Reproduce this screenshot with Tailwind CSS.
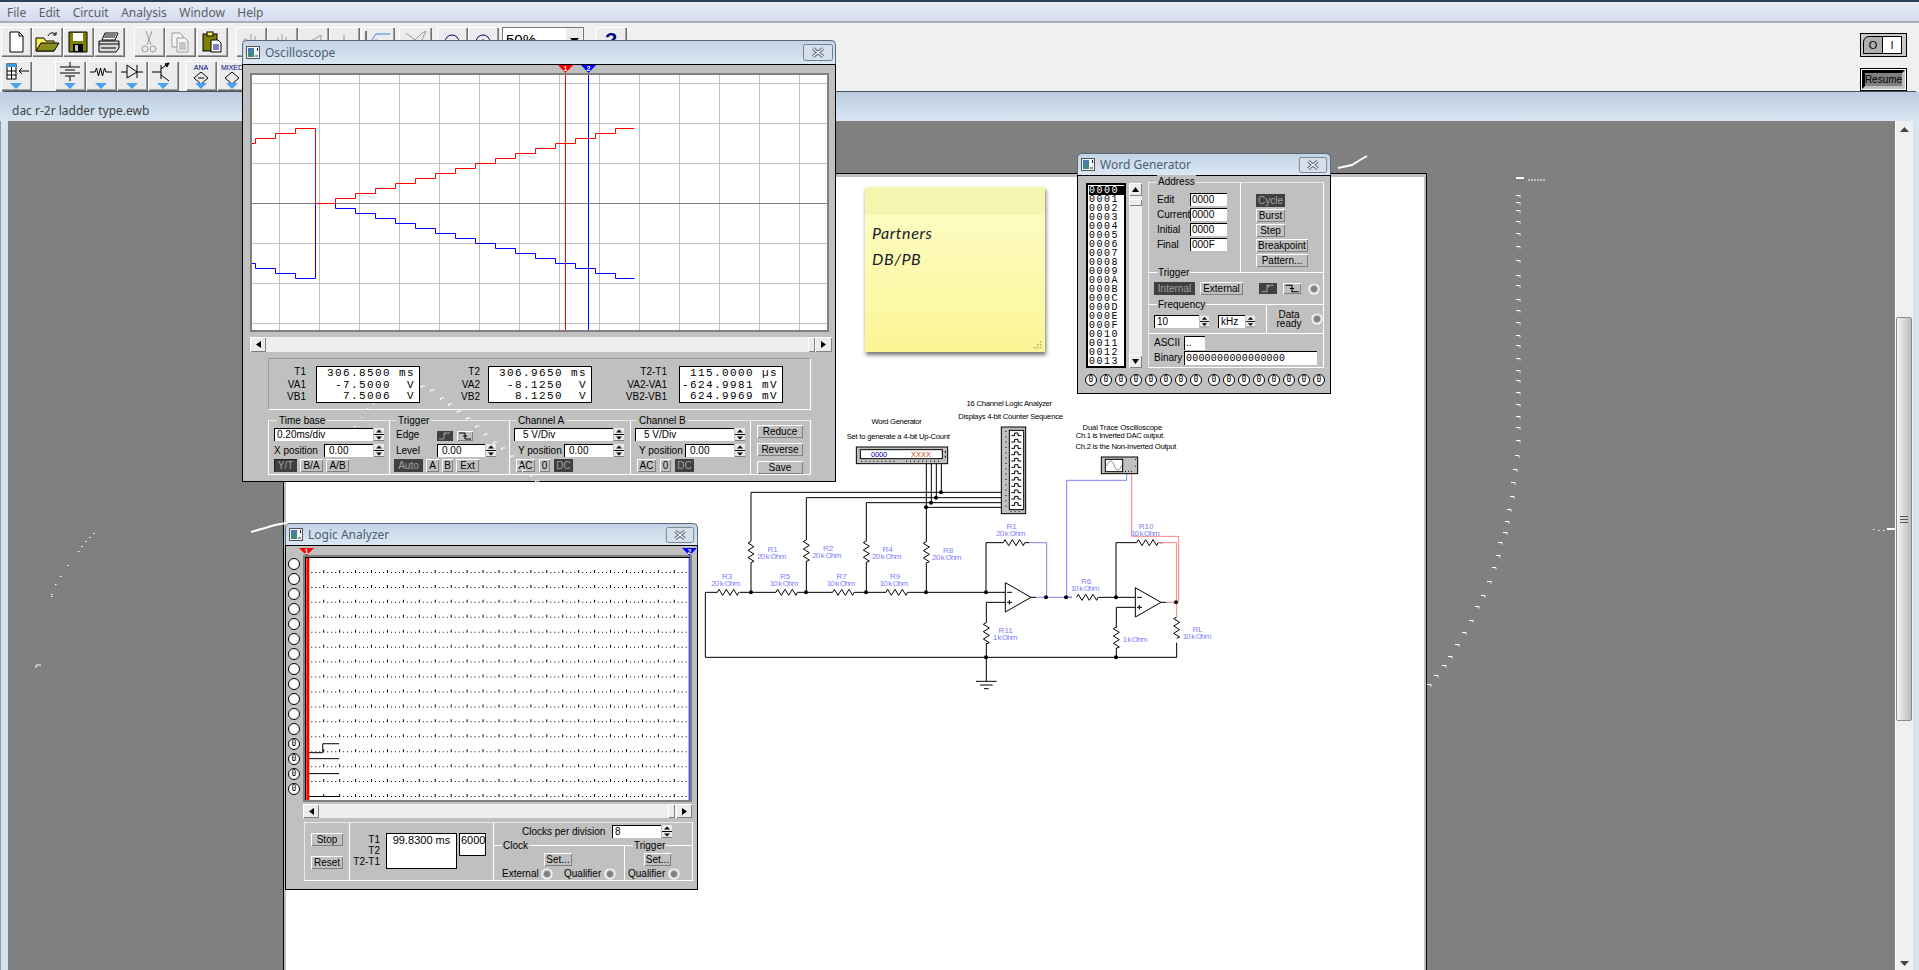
<!DOCTYPE html>
<html lang="en">
<head>
<meta charset="UTF-8">
<title>Electronics Workbench - dac r-2r ladder type.ewb</title>
<script src="https://cdn.jsdelivr.net/npm/@tailwindcss/browser@4"></script>
</head>
<body class="relative w-[1919px] h-[970px] overflow-hidden bg-[#f0f0f0] font-['Liberation_Sans',sans-serif] text-[10px] text-black flex flex-col">

<svg class="absolute w-0 h-0">
  <defs>
    <symbol id="spin" viewBox="0 0 10 13">
      <rect width="10" height="13" fill="#e8e8e8"/><rect y="6" width="10" height="1" fill="#000"/><rect y="12" width="10" height="1" fill="#808080"/>
      <path d="M5 1.5 8 4.5H2z"/><path d="M2 8.5H8L5 11.5z"/>
    </symbol>
    <symbol id="winicon" viewBox="0 0 14 13">
      <rect x=".5" y=".5" width="13" height="12" fill="#f4f4f4" stroke="#555"/>
      <rect x="2" y="2" width="6" height="9" fill="#3c8a80"/><rect x="2" y="2" width="6" height="4" fill="#4a78b0"/><rect x="9" y="9" width="3" height="2" fill="#999"/><rect x="11" y="2" width="1" height="3" fill="#222"/>
    </symbol>
    <symbol id="closex" viewBox="0 0 30 17">
      <rect x=".5" y=".5" width="29" height="16" rx="2" fill="#d5e0ec" stroke="#73808e"/>
      <path d="M10 4.500 20 12.500M20 4.500 10 12.500" stroke="#59636e" stroke-width="3.500"/><path d="M10 4.500 20 12.500M20 4.500 10 12.500" stroke="#f2f4f6" stroke-width="1.500"/>
    </symbol>
    <symbol id="radio" viewBox="0 0 12 12">
      <circle cx="6" cy="6" r="5" fill="#c0c0c0" stroke="#fff" stroke-width="1.200"/><circle cx="6" cy="6" r="3" fill="#808080"/>
    </symbol>
    <symbol id="left" viewBox="0 0 5 7"><path d="M5 0V7L0 3.500z"/></symbol>
    <symbol id="right" viewBox="0 0 5 7"><path d="M0 0V7L5 3.500z"/></symbol>
    <symbol id="rise" viewBox="0 0 16 10"><path d="M2 8H7V2H13M7 2 9 4" fill="none" stroke="currentColor"/></symbol>
    <symbol id="fall" viewBox="0 0 16 10"><path d="M2 2H8V8H14M6 5H10" fill="none" stroke="currentColor"/></symbol>
    <symbol id="tooldrop" viewBox="0 0 12 6"><path d="M0 0H12L6 6z" fill="#4aa3f0"/></symbol>
  </defs>
</svg>

<!-- menu -->
<div class="h-[23px] shrink-0 flex items-center gap-[12.500px] pl-[7px] pt-[2px] border-t-2 border-t-[#2c4058] border-b-2 border-b-[#a8acb4] bg-linear-to-b from-[#e6ebf6] to-[#d5dcee] font-['Noto_Sans',sans-serif] text-[12px] text-[#5a5f68]">
  <span>File</span><span>Edit</span><span>Circuit</span><span>Analysis</span><span>Window</span><span>Help</span>
</div>

<!-- toolbars -->
<div class="h-[68px] shrink-0 relative pt-[4px]">
  <div class="flex h-[29px] pl-px">
    <button class="w-[30px] h-[29px] flex items-center justify-center bg-[#ececec] shadow-[inset_1px_1px_0_#fff,inset_-1px_-1px_0_#a0a0a0,1px_1px_0_#707070]"><svg class="w-[24px] h-[24px]" viewBox="0 0 24 24"><path d="M6 2H15L19 6V22H6z" fill="#fff" stroke="#000"/><path d="M15 2V6H19" fill="none" stroke="#000"/></svg></button>
    <button class="ml-px w-[30px] h-[29px] flex items-center justify-center bg-[#ececec] shadow-[inset_1px_1px_0_#fff,inset_-1px_-1px_0_#a0a0a0,1px_1px_0_#707070]"><svg class="w-[26px] h-[24px]" viewBox="0 0 26 24"><path d="M2 8H10L12 11H20V21H2z" fill="#f4ee60" stroke="#000"/><path d="M2 21 7 13H25L20 21z" fill="#8c8c1a" stroke="#000"/><path d="M14 6C16 2 20 2 22 5M22 2V5H19" fill="none" stroke="#000"/></svg></button>
    <button class="ml-px w-[30px] h-[29px] flex items-center justify-center bg-[#ececec] shadow-[inset_1px_1px_0_#fff,inset_-1px_-1px_0_#a0a0a0,1px_1px_0_#707070]"><svg class="w-[24px] h-[24px]" viewBox="0 0 24 24"><path d="M3 2H21V22H3z" fill="#808000" stroke="#000"/><rect x="7" y="3" width="10" height="8" fill="#fff"/><rect x="7" y="14" width="10" height="8" fill="#000"/><rect x="9" y="15" width="3" height="6" fill="#c0c0c0"/></svg></button>
    <button class="ml-px w-[30px] h-[29px] flex items-center justify-center bg-[#ececec] shadow-[inset_1px_1px_0_#fff,inset_-1px_-1px_0_#a0a0a0,1px_1px_0_#707070]"><svg class="w-[26px] h-[24px]" viewBox="0 0 26 24"><path d="M9 3H22L19 10H6z" fill="#fff" stroke="#000"/><path d="M9 5H20M8 7H19" stroke="#000"/><path d="M3 11H23V18L20 22H3z" fill="#d8d8d8" stroke="#000"/><path d="M3 14H23M5 18H20" stroke="#000"/></svg></button>
    <button class="ml-[10px] w-[30px] h-[29px] flex items-center justify-center bg-[#ececec] shadow-[inset_1px_1px_0_#fff,inset_-1px_-1px_0_#a0a0a0,1px_1px_0_#707070]"><svg class="w-[24px] h-[24px]" viewBox="0 0 24 24" fill="none" stroke="#9a9a9a"><path d="M9 1 14 15M15 1 10 15"/><circle cx="8" cy="19" r="3"/><circle cx="16" cy="19" r="3"/></svg></button>
    <button class="ml-px w-[30px] h-[29px] flex items-center justify-center bg-[#ececec] shadow-[inset_1px_1px_0_#fff,inset_-1px_-1px_0_#a0a0a0,1px_1px_0_#707070]"><svg class="w-[24px] h-[24px]" viewBox="0 0 24 24" fill="#f4f4f4" stroke="#9a9a9a"><path d="M4 3H12L15 6V17H4z"/><path d="M9 8H17L20 11V22H9z"/><path d="M11 13H18M11 15H18M11 17H18M11 19H18" fill="none"/></svg></button>
    <button class="ml-[2px] w-[30px] h-[29px] flex items-center justify-center bg-[#ececec] shadow-[inset_1px_1px_0_#fff,inset_-1px_-1px_0_#a0a0a0,1px_1px_0_#707070]"><svg class="w-[24px] h-[24px]" viewBox="0 0 24 24"><rect x="3" y="4" width="14" height="17" fill="#808000" stroke="#000"/><rect x="7" y="2" width="6" height="4" fill="#f4ee60" stroke="#000"/><path d="M11 10H18L21 13V22H11z" fill="#fff" stroke="#000"/><path d="M13 15H19M13 17H19M13 19H19" stroke="#000080"/></svg></button>
    <button class="ml-[9px] w-[30px] h-[29px] flex items-center justify-center bg-[#ececec] shadow-[inset_1px_1px_0_#fff,inset_-1px_-1px_0_#a0a0a0,1px_1px_0_#707070]"><svg class="w-[24px] h-[24px]" viewBox="0 0 24 24" fill="none" stroke="#9a9a9a"><path d="M3 12C6 8 8 8 10 12M12 4V14M16 6V14"/></svg></button>
    <button class="ml-px w-[30px] h-[29px] flex items-center justify-center bg-[#ececec] shadow-[inset_1px_1px_0_#fff,inset_-1px_-1px_0_#a0a0a0,1px_1px_0_#707070]"><svg class="w-[24px] h-[24px]" viewBox="0 0 24 24" fill="none" stroke="#9a9a9a"><path d="M8 14V7M12 14V4M16 14V7"/></svg></button>
    <button class="ml-px w-[30px] h-[29px] flex items-center justify-center bg-[#ececec] shadow-[inset_1px_1px_0_#fff,inset_-1px_-1px_0_#a0a0a0,1px_1px_0_#707070]"><svg class="w-[24px] h-[24px]" viewBox="0 0 24 24" fill="none" stroke="#9a9a9a"><path d="M5 14 20 5V14z"/></svg></button>
    <button class="ml-px w-[30px] h-[29px] flex items-center justify-center bg-[#ececec] shadow-[inset_1px_1px_0_#fff,inset_-1px_-1px_0_#a0a0a0,1px_1px_0_#707070]"><svg class="w-[24px] h-[24px]" viewBox="0 0 24 24" fill="none" stroke="#9a9a9a"><path d="M12 5V14M9 11 12 14 15 11"/></svg></button>
    <button class="ml-[2px] w-[33px] h-[29px] flex items-center justify-center bg-[#ececec] shadow-[inset_1px_1px_0_#fff,inset_-1px_-1px_0_#a0a0a0,1px_1px_0_#707070]"><svg class="w-[28px] h-[24px]" viewBox="0 0 28 24" fill="none"><path d="M2 1V14" stroke="#000"/><path d="M6 13 12 4H26" stroke="#2a8cf0"/><circle cx="12" cy="13" r="3" stroke="#e00000"/></svg></button>
    <button class="ml-[5px] w-[32px] h-[29px] flex items-center justify-center bg-[#ececec] shadow-[inset_1px_1px_0_#fff,inset_-1px_-1px_0_#a0a0a0,1px_1px_0_#707070]"><svg class="w-[26px] h-[24px]" viewBox="0 0 26 24" fill="none" stroke="#9a9a9a"><path d="M4 3 13 10 20 3 24 1 18 14"/></svg></button>
    <button class="ml-[6px] w-[30px] h-[29px] flex items-center justify-center bg-[#ececec] shadow-[inset_1px_1px_0_#fff,inset_-1px_-1px_0_#a0a0a0,1px_1px_0_#707070]"><svg class="w-[24px] h-[24px]" viewBox="0 0 24 24" fill="none" stroke="#000060"><circle cx="12" cy="12" r="7"/><path d="M9 12H15"/></svg></button>
    <button class="ml-px w-[30px] h-[29px] flex items-center justify-center bg-[#ececec] shadow-[inset_1px_1px_0_#fff,inset_-1px_-1px_0_#a0a0a0,1px_1px_0_#707070]"><svg class="w-[24px] h-[24px]" viewBox="0 0 24 24" fill="none" stroke="#000060"><circle cx="12" cy="12" r="7"/><path d="M9 12H15M12 9V15"/></svg></button>
    <div class="ml-[4px] w-[82px] h-[27px] flex items-start bg-white border border-[#777] text-[15px] leading-[24px] pl-[3px]">50%<span class="ml-auto mr-px w-[16px] h-[25px] bg-[#ececec] flex items-center justify-center"><svg class="w-[9px] h-[5px]" viewBox="0 0 9 5"><path d="M0 0H9L4.500 5z"/></svg></span></div>
    <button class="ml-[12px] w-[30px] h-[29px] flex justify-center bg-[#ececec] shadow-[inset_1px_1px_0_#fff,inset_-1px_-1px_0_#a0a0a0,1px_1px_0_#707070] text-[#000080] text-[20px] font-bold leading-[26px]">?</button>
  </div>
  <div class="flex h-[29px] pl-px mt-[5px]">
    <button class="relative w-[30px] h-[29px] flex justify-center bg-[#ececec] shadow-[inset_1px_1px_0_#fff,inset_-1px_-1px_0_#a0a0a0,1px_1px_0_#707070]"><svg class="w-[28px] h-[21px]" viewBox="0 0 28 21"><rect x="5" y="3" width="9" height="15" fill="#fff" stroke="#000"/><rect x="5" y="3" width="9" height="3" fill="#3a9cf0"/><path d="M5 10H14M5 14H14M9.500 6V18M27 10H17M20 7 17 10 20 13" fill="none" stroke="#000"/></svg><svg class="absolute bottom-[1px] left-[9px] w-[12px] h-[6px]"><use href="#tooldrop"/></svg></button>
    <button class="relative ml-[24px] w-[30px] h-[29px] flex justify-center bg-[#ececec] shadow-[inset_1px_1px_0_#fff,inset_-1px_-1px_0_#a0a0a0,1px_1px_0_#707070]"><svg class="w-[24px] h-[21px]" viewBox="0 0 24 21" fill="none" stroke="#000"><path d="M12 1V6M2 6H22M7 9H17M2 12H22M7 15H17M12 15V20"/></svg><svg class="absolute bottom-[1px] left-[9px] w-[12px] h-[6px]"><use href="#tooldrop"/></svg></button>
    <button class="relative ml-px w-[30px] h-[29px] flex justify-center bg-[#ececec] shadow-[inset_1px_1px_0_#fff,inset_-1px_-1px_0_#a0a0a0,1px_1px_0_#707070]"><svg class="w-[24px] h-[21px]" viewBox="0 0 24 21" fill="none" stroke="#000"><path d="M1 11H6L7.500 7 9.500 15 11.500 7 13.500 15 15.500 7 17 11H23"/></svg><svg class="absolute bottom-[1px] left-[9px] w-[12px] h-[6px]"><use href="#tooldrop"/></svg></button>
    <button class="relative ml-px w-[30px] h-[29px] flex justify-center bg-[#ececec] shadow-[inset_1px_1px_0_#fff,inset_-1px_-1px_0_#a0a0a0,1px_1px_0_#707070]"><svg class="w-[24px] h-[21px]" viewBox="0 0 24 21" fill="none" stroke="#000"><path d="M1 11H7M17 11H23M7 4V17L17 11 7 4M17 4V17"/></svg><svg class="absolute bottom-[1px] left-[9px] w-[12px] h-[6px]"><use href="#tooldrop"/></svg></button>
    <button class="relative ml-px w-[30px] h-[29px] flex justify-center bg-[#ececec] shadow-[inset_1px_1px_0_#fff,inset_-1px_-1px_0_#a0a0a0,1px_1px_0_#707070]"><svg class="w-[24px] h-[21px]" viewBox="0 0 24 21" fill="none" stroke="#000"><path d="M1 11H10M10 4V18M10 8 18 2M10 14 18 20"/><path d="M18 2 14 3 16 6z" fill="#000"/></svg><svg class="absolute bottom-[1px] left-[9px] w-[12px] h-[6px]"><use href="#tooldrop"/></svg></button>
    <button class="relative ml-[8px] w-[30px] h-[29px] flex flex-col items-center bg-[#ececec] shadow-[inset_1px_1px_0_#fff,inset_-1px_-1px_0_#a0a0a0,1px_1px_0_#707070]"><span class="text-[7px] leading-[9px] mt-[2px] text-[#000080]">ANA</span><svg class="w-[16px] h-[12px]" viewBox="0 0 16 12" fill="none" stroke="#000"><path d="M8 0 15 6 8 12 1 6z"/><path d="M5 6H11"/></svg><svg class="absolute bottom-[1px] left-[9px] w-[12px] h-[6px]"><use href="#tooldrop"/></svg></button>
    <button class="relative ml-px w-[30px] h-[29px] flex flex-col items-center bg-[#ececec] shadow-[inset_1px_1px_0_#fff,inset_-1px_-1px_0_#a0a0a0,1px_1px_0_#707070]"><span class="text-[7px] leading-[9px] mt-[2px] text-[#000080]">MIXED</span><svg class="w-[16px] h-[12px]" viewBox="0 0 16 12" fill="none" stroke="#000"><path d="M8 0 15 6 8 12 1 6z"/></svg><svg class="absolute bottom-[1px] left-[9px] w-[12px] h-[6px]"><use href="#tooldrop"/></svg></button>
  </div>
  <!-- power switch and resume, pinned to the right end of the toolbar -->
  <div class="absolute right-[12px] top-[10px] flex flex-col gap-[11px]">
    <div class="w-[47px] h-[24px] flex border border-black bg-[#c8c8c8] p-[2px]">
      <span class="w-[20px] flex items-center justify-center text-[11px] bg-[#b0b0b0] border border-black rounded-tl-[6px]">O</span>
      <span class="w-[19px] flex items-center justify-center text-[11px] bg-white border border-l-0 border-black">I</span>
    </div>
    <div class="w-[47px] h-[23px] border border-black bg-white p-[1px]">
      <div class="h-full border-[3px] border-t-black border-l-black border-r-[#c0c0c0] border-b-[#c0c0c0] bg-[#808080] flex items-center justify-center text-[10px] leading-none">Resume</div>
    </div>
  </div>
</div>

<!-- circuit window -->
<div class="flex-1 flex flex-col min-h-0 rounded-t-[5px] border-t border-[#44505c] bg-[#d6e4f2]">
  <div class="h-[29px] shrink-0 flex items-center pl-[12px] pt-[8px] bg-linear-to-b from-[#bccddf] to-[#d8e5f2] font-['Noto_Sans',sans-serif] text-[12px] text-[#444]">dac r-2r ladder type.ewb</div>
  <div class="flex-1 flex min-h-0">
    <div class="w-[8px] shrink-0 border-l border-l-[#8a9aaa]"></div>
    <div class="relative w-[1887px] bg-[#808080] overflow-hidden">
      <div class="absolute left-[275px] top-[52px] w-[1144px] h-[800px] border-x border-t border-black">
        <div class="relative h-full bg-white border-x-2 border-t-[3px] border-[#c0c0c0]">
          <!-- sticky note -->
          <div class="absolute left-[579px] top-[10px] w-[180px] h-[165px] flex flex-col shadow-[1px_3px_4px_rgba(0,0,0,0.55)] bg-linear-to-b from-[#fefdc9] to-[#fbf594]">
            <div class="h-[28px] bg-[#f6f5b0]"></div>
            <div class="pl-[7px] pt-[5px] font-['Lato',sans-serif] italic text-[16px] leading-[26px] tracking-[0.600px] text-[#16202a]">Partners<br>DB/PB</div>
            <svg class="absolute right-[3px] bottom-[3px] w-[8px] h-[8px]" viewBox="0 0 8 8" fill="#b4b070"><rect x="6" width="1.500" height="1.500"/><rect x="3" y="3" width="1.500" height="1.500"/><rect x="6" y="3" width="1.500" height="1.500"/><rect y="6" width="1.500" height="1.500"/><rect x="3" y="6" width="1.500" height="1.500"/><rect x="6" y="6" width="1.500" height="1.500"/></svg>
          </div>
          <!-- schematic, drawn in 3x units so it lines up with a 3x crop -->
          <svg id="schematic" class="absolute left-[414px] top-[214px] w-[520px] h-[310px]" viewBox="0 0 1560 930" fill="none" stroke="#000" stroke-width="3" font-family="Liberation Sans, sans-serif">
            <defs>
              <path id="rh" d="M0 0l5-9 11 18 11-18 11 18 11-18 11 18 4-9"/>
              <path id="rv" d="M0 0l-9 5 18 11-18 11 18 11-18 11 18 11-9 4"/>
            </defs>
            <path d="M52 604H16V799H1430V755M118 604H228M292 604H398M462 604H558M622 604H915"/>
            <path d="M153 604V515M153 450V304H905M319 604V510M319 447V320H905M499 604V513M499 450V335H905M679 604V515M679 452V218M679 349H905M694 218V335M709 218V320M724 218V304"/>
            <path d="M858 604V455H910M974 455H988M993 619H1008M1100 619H1115M1195 619H1305M1248 619V455H1310M1375 455H1390M1383 634H1398"/>
            <path d="M915 634H859V695M859 755V870M828 871H890M840 882H878M852 893H866M1305 649H1249V710M1249 770V799"/>
            <use href="#rh" x="52" y="604"/><use href="#rh" x="228" y="604"/><use href="#rh" x="398" y="604"/><use href="#rh" x="558" y="604"/>
            <use href="#rh" x="910" y="455"/><use href="#rh" x="1130" y="619"/><use href="#rh" x="1310" y="455"/>
            <use href="#rv" x="153" y="451"/><use href="#rv" x="319" y="447"/><use href="#rv" x="499" y="450"/><use href="#rv" x="679" y="452"/>
            <use href="#rv" x="859" y="695"/><use href="#rv" x="1249" y="708"/><use href="#rv" x="1430" y="678"/>
            <path d="M916 575V663L993 619zM1306 590V678L1383 634zM921 604H936M921 634H936M928 627V641M1311 619H1326M1311 649H1326M1318 642V656"/>
            <path d="M988 455H1040V619M1008 619H1115M1280 248V268H1100V619" stroke="#8080ff"/>
            <path d="M1375 455H1430V634M1295 248V436H1436V634M1398 634H1430V678" stroke="#ff8080"/>
            <g fill="#000" stroke="none">
              <circle cx="153" cy="604" r="6"/><circle cx="318" cy="604" r="6"/><circle cx="498" cy="604" r="6"/><circle cx="678" cy="604" r="6"/><circle cx="858" cy="604" r="6"/>
              <circle cx="1038" cy="619" r="6"/><circle cx="1098" cy="619" r="6"/><circle cx="1248" cy="619" r="6"/><circle cx="1428" cy="634" r="6"/>
              <circle cx="858" cy="799" r="6"/><circle cx="1248" cy="799" r="6"/>
              <circle cx="723" cy="304" r="6"/><circle cx="708" cy="320" r="6"/><circle cx="693" cy="335" r="6"/><circle cx="678" cy="349" r="6"/>
            </g>
            <!-- word generator icon -->
            <rect x="469" y="168" width="274" height="50" fill="#c0c0c0"/>
            <rect x="481" y="176" width="246" height="27" fill="#fff"/>
            <text x="537" y="197" text-anchor="middle" font-size="22" fill="#0000c0" stroke="none" textLength="48">0000</text>
            <text x="663" y="197" text-anchor="middle" font-size="22" fill="#c04000" stroke="none" textLength="60">XXXX</text>
            <path d="M484 211H590M618 211H726" stroke-dasharray="3 9"/>
            <path d="M736 180V186M736 194V200"/>
            <!-- logic analyzer icon -->
            <rect x="904" y="108" width="73" height="260" fill="#c0c0c0"/>
            <rect x="928" y="118" width="43" height="238" fill="#fff"/>
            <path d="M918 120V350" stroke-dasharray="3 13"/>
            <g id="lawaves"></g>
            <path d="M932 362H968" stroke-dasharray="3 9"/>
            <!-- scope icon -->
            <rect x="1204" y="198" width="109" height="50" fill="#c0c0c0"/>
            <rect x="1216" y="205" width="52" height="37" fill="#fff"/>
            <path d="M1220 224C1230 200 1240 212 1243 224S1256 246 1265 224" stroke="#808080"/>
            <path d="M1275 241H1297M1307 204V210M1307 224V230" stroke-dasharray="3 6"/>
            <g fill="#000" stroke="none" font-size="23">
              <text x="928" y="45" textLength="257" text-anchor="middle">16 Channel Logic Analyzer</text>
              <text x="932" y="84" textLength="314" text-anchor="middle">Displays 4-bit Counter Sequence</text>
              <text x="590" y="98" textLength="151" text-anchor="middle">Word Generator</text>
              <text x="595" y="144" textLength="310" text-anchor="middle">Set to generate a 4-bit Up-Count</text>
              <text x="1267" y="117" textLength="239" text-anchor="middle">Dual Trace Oscilloscope</text>
              <text x="1261" y="141" textLength="268" text-anchor="middle">Ch.1 is Inverted DAC output.</text>
              <text x="1278" y="174" textLength="303" text-anchor="middle">Ch.2 is the Non-Inverted Output</text>
            </g>
            <g fill="#8080ff" stroke="none" font-size="24" text-anchor="middle">
              <text x="81" y="564">R3</text><text x="77" y="585" textLength="88">20 k Ohm</text>
              <text x="255" y="564">R5</text><text x="252" y="585" textLength="86">10 k Ohm</text>
              <text x="425" y="564">R7</text><text x="423" y="585" textLength="86">10 k Ohm</text>
              <text x="585" y="564">R9</text><text x="582" y="585" textLength="86">10 k Ohm</text>
              <text x="218" y="484">R1</text><text x="215" y="504" textLength="88">20 k Ohm</text>
              <text x="384" y="480">R2</text><text x="380" y="501" textLength="88">20 k Ohm</text>
              <text x="563" y="484">R4</text><text x="560" y="504" textLength="88">20 k Ohm</text>
              <text x="744" y="487">R8</text><text x="740" y="507" textLength="88">20 k Ohm</text>
              <text x="935" y="415">R1</text><text x="932" y="435" textLength="88">20 k Ohm</text>
              <text x="917" y="726">R11</text><text x="915" y="747" textLength="74">1 k Ohm</text>
              <text x="1158" y="579">R6</text><text x="1155" y="600" textLength="86">10 k Ohm</text>
              <text x="1338" y="414">R10</text><text x="1336" y="435" textLength="86">10 k Ohm</text>
              <text x="1305" y="753" textLength="74">1 k Ohm</text>
              <text x="1493" y="723">RL</text><text x="1491" y="744" textLength="86">10 k Ohm</text>
            </g>
          </svg>
        </div>
      </div>
    </div>
    <!-- vertical scrollbar -->
    <div class="relative w-[18px] shrink-0 bg-[#f0f0f0] border-l border-white">
      <svg class="absolute left-[4px] top-[6px] w-[9px] h-[5px]" viewBox="0 0 9 5"><path d="M4.500 0 9 5H0z" fill="#444"/></svg>
      <div class="absolute left-0 top-[196px] w-[16px] h-[404px] flex items-center justify-center rounded-[2px] border border-[#8c8c8c] bg-linear-to-r from-[#f4f4f4] to-[#bcbcbc]">
        <svg class="w-[8px] h-[7px]" viewBox="0 0 8 7" stroke="#555"><path d="M0 .5H8M0 3.500H8M0 6.500H8"/></svg>
      </div>
      <svg class="absolute left-[4px] bottom-[4px] w-[9px] h-[5px]" viewBox="0 0 9 5"><path d="M0 0H9L4.500 5z" fill="#444"/></svg>
    </div>
    <div class="w-[6px] shrink-0"></div>
  </div>
</div>

<!-- oscilloscope -->
<section class="absolute left-[242px] top-[40px] w-[594px] h-[442px] flex flex-col">
  <div class="h-[24px] shrink-0 flex items-center pl-[3px] pr-[2px] rounded-t-[5px] border border-b-0 border-[#5a6a7a] bg-linear-to-b from-[#c4d4e4] to-[#dce8f4] font-['Noto_Sans',sans-serif] text-[12px] text-[#4a6075]">
    <svg class="w-[14px] h-[13px] mr-[5px]"><use href="#winicon"/></svg>Oscilloscope
    <svg class="ml-auto w-[30px] h-[17px]"><use href="#closex"/></svg>
  </div>
  <div class="relative flex-1 border border-black bg-[#c0c0c0]">
    <svg class="absolute left-0 top-0 w-[590px] h-[9px]" viewBox="243 65 590 9">
      <path d="M558 65H573L565.500 73z" fill="#f00"/><path d="M581 65H596L588.500 73z" fill="#00f"/>
      <text x="565.500" y="70.500" text-anchor="middle" font-size="7" font-weight="700" fill="#fff">1</text><text x="588.500" y="70.500" text-anchor="middle" font-size="7" font-weight="700" fill="#fff">2</text>
    </svg>
    <div class="mt-[8px] ml-[7px] w-[579px] h-[259px] border-2 border-[#808080] bg-white">
      <svg id="scope" class="block w-[575px] h-[255px]" viewBox="252 75 575 255" fill="none"></svg>
    </div>
    <div class="mt-[5px] ml-[7px] w-[582px] h-[15px] flex bg-[#efefef]">
      <button class="w-[16px] flex items-center justify-center bg-[#ececec] shadow-[inset_1px_1px_0_#fff,inset_-1px_-1px_0_#808080]"><svg class="w-[5px] h-[7px]"><use href="#left"/></svg></button>
      <button class="ml-auto w-[7px] bg-[#ececec] shadow-[inset_1px_1px_0_#fff,inset_-1px_-1px_0_#808080]"></button>
      <button class="w-[17px] flex items-center justify-center bg-[#ececec] shadow-[inset_1px_1px_0_#fff,inset_-1px_-1px_0_#808080]"><svg class="w-[5px] h-[7px]"><use href="#right"/></svg></button>
    </div>
    <!-- readouts -->
    <div class="mt-[6px] ml-[25px] w-[543px] h-[52px] flex pt-[7px] border border-white border-t-[#9a9a9a] border-l-[#9a9a9a]">
      <div class="w-[37px] text-right leading-[12.500px]">T1<br>VA1<br>VB1</div>
      <pre class="ml-[10px] w-[104px] h-[37px] pl-[2px] pt-px bg-white border border-black font-['Liberation_Mono',monospace] text-[11px] tracking-[1.400px] leading-[11.700px]"> 306.8500 ms
  -7.5000  V
   7.5006  V</pre>
      <div class="w-[60px] text-right leading-[12.500px]">T2<br>VA2<br>VB2</div>
      <pre class="ml-[8px] w-[104px] h-[37px] pl-[2px] pt-px bg-white border border-black font-['Liberation_Mono',monospace] text-[11px] tracking-[1.400px] leading-[11.700px]"> 306.9650 ms
  -8.1250  V
   8.1250  V</pre>
      <div class="w-[75px] text-right leading-[12.500px]">T2-T1<br>VA2-VA1<br>VB2-VB1</div>
      <pre class="ml-[12px] w-[104px] h-[37px] pl-[2px] pt-px bg-white border border-black font-['Liberation_Mono',monospace] text-[11px] tracking-[1.400px] leading-[11.700px]"> 115.0000 µs
-624.9981 mV
 624.9969 mV</pre>
    </div>
    <!-- controls -->
    <div class="mt-[10px] ml-[25px] w-[543px] h-[55px] flex border border-white border-t-[#e8e8e8]">
      <div class="w-[121px] pl-[5px] border-r border-white">
        <div class="-mt-[7px] ml-[3px] w-fit h-[14px] px-[2px] leading-[14px] bg-[#c0c0c0]">Time base</div>
        <div class="flex h-[13px]"><div class="w-[99px] bg-white border-t border-l border-black pl-[2px] leading-[12px]">0.20ms/div</div><svg class="ml-px w-[10px] h-[13px]"><use href="#spin"/></svg></div>
        <div class="flex h-[13px] mt-[3px]"><span class="w-[50px] leading-[13px]">X position</span><div class="w-[49px] bg-white border-t border-l border-black pl-[4px] leading-[12px]">0.00</div><svg class="ml-px w-[10px] h-[13px]"><use href="#spin"/></svg></div>
        <div class="flex gap-[3px] mt-[2px] h-[13px]">
          <span class="w-[23px] flex items-center justify-center bg-[#404040] text-[#a0a0a0] shadow-[inset_1px_1px_0_#222]">Y/T</span>
          <span class="w-[23px] flex items-center justify-center shadow-[inset_1px_1px_0_#fff,inset_-1px_-1px_0_#808080]">B/A</span>
          <span class="w-[23px] flex items-center justify-center shadow-[inset_1px_1px_0_#fff,inset_-1px_-1px_0_#808080]">A/B</span>
        </div>
      </div>
      <div class="w-[120px] pl-[6px] border-r border-white">
        <div class="-mt-[7px] w-fit h-[14px] px-[2px] leading-[14px] bg-[#c0c0c0]">Trigger</div>
        <div class="flex h-[13px] items-end"><span class="w-[41px] leading-[13px]">Edge</span>
          <svg class="w-[16px] h-[10px] bg-[#404040] text-[#a0a0a0]"><use href="#rise"/></svg>
          <svg class="ml-[4px] w-[16px] h-[10px] text-black shadow-[inset_1px_1px_0_#fff,inset_-1px_-1px_0_#808080]"><use href="#fall"/></svg>
        </div>
        <div class="flex h-[13px] mt-[3px]"><span class="w-[41px] leading-[13px]">Level</span><div class="w-[48px] bg-white border-t border-l border-black pl-[4px] leading-[12px]">0.00</div><svg class="ml-px w-[10px] h-[13px]"><use href="#spin"/></svg></div>
        <div class="flex gap-[3px] -ml-[2px] mt-[2px] h-[13px]">
          <span class="w-[29px] flex items-center justify-center bg-[#404040] text-[#a0a0a0]">Auto</span>
          <span class="w-[13px] flex items-center justify-center shadow-[inset_1px_1px_0_#fff,inset_-1px_-1px_0_#808080]">A</span>
          <span class="w-[11px] flex items-center justify-center shadow-[inset_1px_1px_0_#fff,inset_-1px_-1px_0_#808080]">B</span>
          <span class="w-[23px] flex items-center justify-center shadow-[inset_1px_1px_0_#fff,inset_-1px_-1px_0_#808080]">Ext</span>
        </div>
      </div>
      <div class="w-[121px] pl-[4px] border-r border-white">
        <div class="-mt-[7px] ml-[2px] w-fit h-[14px] px-[2px] leading-[14px] bg-[#c0c0c0]">Channel A</div>
        <div class="flex h-[13px]"><div class="w-[99px] bg-white border-t border-l border-black pl-[8px] leading-[12px]">5 V/Div</div><svg class="ml-px w-[10px] h-[13px]"><use href="#spin"/></svg></div>
        <div class="flex h-[13px] mt-[3px]"><span class="w-[50px] pl-[4px] leading-[13px] whitespace-nowrap">Y position</span><div class="w-[49px] bg-white border-t border-l border-black pl-[4px] leading-[12px]">0.00</div><svg class="ml-px w-[10px] h-[13px]"><use href="#spin"/></svg></div>
        <div class="flex gap-[4px] ml-[2px] mt-[2px] h-[13px]">
          <span class="w-[19px] flex items-center justify-center shadow-[inset_1px_1px_0_#fff,inset_-1px_-1px_0_#808080]">AC</span>
          <span class="w-[11px] flex items-center justify-center shadow-[inset_1px_1px_0_#fff,inset_-1px_-1px_0_#808080]">0</span>
          <span class="w-[19px] flex items-center justify-center bg-[#404040] text-[#a0a0a0]">DC</span>
        </div>
      </div>
      <div class="w-[120px] pl-[4px] border-r border-white">
        <div class="-mt-[7px] ml-[2px] w-fit h-[14px] px-[2px] leading-[14px] bg-[#c0c0c0]">Channel B</div>
        <div class="flex h-[13px]"><div class="w-[99px] bg-white border-t border-l border-black pl-[8px] leading-[12px]">5 V/Div</div><svg class="ml-px w-[10px] h-[13px]"><use href="#spin"/></svg></div>
        <div class="flex h-[13px] mt-[3px]"><span class="w-[50px] pl-[4px] leading-[13px] whitespace-nowrap">Y position</span><div class="w-[49px] bg-white border-t border-l border-black pl-[4px] leading-[12px]">0.00</div><svg class="ml-px w-[10px] h-[13px]"><use href="#spin"/></svg></div>
        <div class="flex gap-[4px] ml-[2px] mt-[2px] h-[13px]">
          <span class="w-[19px] flex items-center justify-center shadow-[inset_1px_1px_0_#fff,inset_-1px_-1px_0_#808080]">AC</span>
          <span class="w-[11px] flex items-center justify-center shadow-[inset_1px_1px_0_#fff,inset_-1px_-1px_0_#808080]">0</span>
          <span class="w-[19px] flex items-center justify-center bg-[#404040] text-[#a0a0a0]">DC</span>
        </div>
      </div>
      <div class="flex-1 flex flex-col gap-[5px] pl-[6px] pt-[4px]">
        <span class="w-[46px] h-[13px] flex items-center justify-center shadow-[inset_1px_1px_0_#fff,inset_-1px_-1px_0_#808080]">Reduce</span>
        <span class="w-[46px] h-[13px] flex items-center justify-center shadow-[inset_1px_1px_0_#fff,inset_-1px_-1px_0_#808080]">Reverse</span>
        <span class="w-[46px] h-[13px] flex items-center justify-center shadow-[inset_1px_1px_0_#fff,inset_-1px_-1px_0_#808080]">Save</span>
      </div>
    </div>
  </div>
</section>

<!-- word generator -->
<section class="absolute left-[1077px] top-[153px] w-[254px] h-[241px] flex flex-col">
  <div class="h-[22px] shrink-0 flex items-center pl-[3px] pr-[2px] rounded-t-[5px] border border-b-0 border-[#5a6a7a] bg-linear-to-b from-[#c4d4e4] to-[#dce8f4] font-['Noto_Sans',sans-serif] text-[12px] text-[#4a6075]">
    <svg class="w-[14px] h-[13px] mr-[5px]"><use href="#winicon"/></svg>Word Generator
    <svg class="ml-auto w-[30px] h-[16px]"><use href="#closex"/></svg>
  </div>
  <div class="flex-1 border border-black bg-[#c0c0c0]">
    <div class="flex pt-[7px]">
      <div id="words" class="ml-[8px] w-[40px] h-[185px] overflow-hidden border-2 border-black bg-white pl-[1px] pt-[1px] font-['Liberation_Mono',monospace] text-[10px] leading-[9px] tracking-[1.500px]"></div>
      <div class="ml-[3px] w-[13px] h-[185px] flex flex-col bg-[#efefef]">
        <span class="h-[13px] flex items-center justify-center shadow-[inset_1px_1px_0_#fff,inset_-1px_-1px_0_#808080] bg-[#ececec]"><svg class="w-[7px] h-[5px]" viewBox="0 0 7 5"><path d="M3.500 0 7 5H0z"/></svg></span>
        <span class="h-[7px] mt-[3px] shadow-[inset_1px_1px_0_#fff,inset_-1px_-1px_0_#808080] bg-[#ececec]"></span>
        <span class="mt-auto h-[13px] flex items-center justify-center shadow-[inset_1px_1px_0_#fff,inset_-1px_-1px_0_#808080] bg-[#ececec]"><svg class="w-[7px] h-[5px]" viewBox="0 0 7 5"><path d="M0 0H7L3.500 5z"/></svg></span>
      </div>
      <div class="ml-[6px] w-[176px] h-[186px] -mt-px border border-white border-t-[#e8e8e8] border-l-[#e8e8e8] flex flex-col">
        <div class="h-[89px] flex">
          <div class="w-[91px] pl-[8px]">
            <div class="-mt-[8px] mb-[4px] w-fit h-[14px] px-[1px] leading-[14px] bg-[#c0c0c0]">Address</div>
            <div class="grid grid-cols-[33px_37px] gap-y-[2px] auto-rows-[13px] leading-[13px]">
              <span>Edit</span><span class="bg-white border-t border-l border-black pl-[1px] leading-[12px]">0000</span>
              <span>Current</span><span class="bg-white border-t border-l border-black pl-[1px] leading-[12px]">0000</span>
              <span>Initial</span><span class="bg-white border-t border-l border-black pl-[1px] leading-[12px]">0000</span>
              <span>Final</span><span class="bg-white border-t border-l border-black pl-[1px] leading-[12px]">000F</span>
            </div>
          </div>
          <div class="flex-1 flex flex-col items-start gap-[2px] pl-[15px] pt-[11px] border-l border-white">
            <span class="w-[29px] h-[13px] flex items-center justify-center bg-[#404040] text-[#a0a0a0]">Cycle</span>
            <span class="w-[29px] h-[13px] flex items-center justify-center shadow-[inset_1px_1px_0_#fff,inset_-1px_-1px_0_#808080]">Burst</span>
            <span class="w-[29px] h-[13px] flex items-center justify-center shadow-[inset_1px_1px_0_#fff,inset_-1px_-1px_0_#808080]">Step</span>
            <span class="w-[52px] h-[13px] flex items-center justify-center shadow-[inset_1px_1px_0_#fff,inset_-1px_-1px_0_#808080]">Breakpoint</span>
            <span class="w-[52px] h-[13px] flex items-center justify-center shadow-[inset_1px_1px_0_#fff,inset_-1px_-1px_0_#808080]">Pattern...</span>
          </div>
        </div>
        <div class="h-[32px] border-t border-white">
          <div class="-mt-[7px] ml-[8px] w-fit h-[14px] px-[1px] leading-[14px] bg-[#c0c0c0]">Trigger</div>
          <div class="flex items-center pl-[5px] mt-[2px]">
            <span class="w-[41px] h-[13px] flex items-center justify-center bg-[#404040] text-[#a0a0a0]">Internal</span>
            <span class="ml-[5px] w-[43px] h-[13px] flex items-center justify-center shadow-[inset_1px_1px_0_#fff,inset_-1px_-1px_0_#808080]">External</span>
            <svg class="ml-[16px] w-[18px] h-[11px] bg-[#404040] text-[#a0a0a0]"><use href="#rise"/></svg>
            <svg class="ml-[6px] w-[18px] h-[11px] shadow-[inset_1px_1px_0_#fff,inset_-1px_-1px_0_#808080]"><use href="#fall"/></svg>
            <svg class="ml-[7px] w-[12px] h-[12px]"><use href="#radio"/></svg>
          </div>
        </div>
        <div class="h-[29px] flex border-t border-white">
          <div class="w-[117px] pl-[5px]">
            <div class="-mt-[7px] ml-[3px] w-fit h-[14px] px-[1px] leading-[14px] bg-[#c0c0c0]">Frequency</div>
            <div class="flex h-[13px] mt-[3px]">
              <span class="w-[45px] bg-white border-t border-l border-black pl-[2px] leading-[12px]">10</span><svg class="ml-px w-[9px] h-[13px]"><use href="#spin"/></svg>
              <span class="ml-[9px] w-[27px] bg-white border-t border-l border-black pl-[2px] leading-[12px]">kHz</span><svg class="ml-px w-[9px] h-[13px]"><use href="#spin"/></svg>
            </div>
          </div>
          <div class="flex-1 flex items-center border-l border-white pl-[2px]">
            <span class="w-[40px] text-center leading-[9px]">Data ready</span>
            <svg class="ml-[2px] w-[12px] h-[12px]"><use href="#radio"/></svg>
          </div>
        </div>
        <div class="flex-1 border-t border-white pl-[5px] pt-[2px]">
          <div class="flex h-[14px]"><span class="w-[30px] leading-[14px]">ASCII</span><span class="w-[21px] bg-white border-t border-l border-black pl-[1px] leading-[12px]">..</span></div>
          <div class="flex h-[14px] mt-[1px]"><span class="w-[30px] leading-[14px]">Binary</span><span class="w-[133px] bg-white border-t border-l border-black pl-[1px] leading-[13px] font-['Liberation_Mono',monospace] text-[10px] tracking-[0.200px]">0000000000000000</span></div>
        </div>
      </div>
    </div>
    <div id="wordbits" class="flex mt-[6px] ml-[7px] gap-[3px]"></div>
  </div>
</section>

<!-- logic analyzer -->
<section class="absolute left-[285px] top-[523px] w-[413px] h-[367px] flex flex-col">
  <div class="h-[22px] shrink-0 flex items-center pl-[3px] pr-[2px] rounded-t-[5px] border border-b-0 border-[#5a6a7a] bg-linear-to-b from-[#c4d4e4] to-[#dce8f4] font-['Noto_Sans',sans-serif] text-[12px] text-[#4a6075]">
    <svg class="w-[14px] h-[13px] mr-[5px]"><use href="#winicon"/></svg>Logic Analyzer
    <svg class="ml-auto w-[30px] h-[16px]"><use href="#closex"/></svg>
  </div>
  <div class="relative flex-1 border border-black bg-[#c0c0c0]">
    <svg class="absolute left-0 top-[1px] w-[410px] h-[9px]" viewBox="286 546 410 9">
      <path d="M299 547H314L306.500 554.500z" fill="#f00"/><path d="M682 547H697L689.500 554.500z" fill="#00f"/>
      <text x="306.500" y="552.500" text-anchor="middle" font-size="7" font-weight="700" fill="#fff">1</text><text x="689.500" y="552.500" text-anchor="middle" font-size="7" font-weight="700" fill="#fff">2</text>
    </svg>
    <div class="flex mt-[9px]">
      <div id="probes" class="w-[17px] pl-[2px] pt-[3px] flex flex-col gap-[3px]"></div>
      <div class="w-[389px] h-[247px] border-2 border-[#808080] bg-white">
        <svg id="logic" class="block w-[385px] h-[243px] border-t border-l border-black" viewBox="305 557 385 243"></svg>
      </div>
    </div>
    <div class="mt-[2px] ml-[17px] w-[389px] h-[14px] flex bg-[#efefef]">
      <button class="w-[16px] flex items-center justify-center bg-[#ececec] shadow-[inset_1px_1px_0_#fff,inset_-1px_-1px_0_#808080]"><svg class="w-[5px] h-[7px]"><use href="#left"/></svg></button>
      <button class="ml-auto w-[7px] bg-[#ececec] shadow-[inset_1px_1px_0_#fff,inset_-1px_-1px_0_#808080]"></button>
      <button class="ml-px w-[16px] flex items-center justify-center bg-[#ececec] shadow-[inset_1px_1px_0_#fff,inset_-1px_-1px_0_#808080]"><svg class="w-[5px] h-[7px]"><use href="#right"/></svg></button>
    </div>
    <div class="mt-[4px] ml-[18px] w-[389px] h-[59px] flex border border-white border-t-[#e8e8e8] border-l-[#e8e8e8]">
      <div class="w-[45px] flex flex-col gap-[10px] pl-[6px] pt-[10px] border-r border-white">
        <span class="w-[32px] h-[13px] flex items-center justify-center shadow-[inset_1px_1px_0_#fff,inset_-1px_-1px_0_#808080]">Stop</span>
        <span class="w-[32px] h-[13px] flex items-center justify-center shadow-[inset_1px_1px_0_#fff,inset_-1px_-1px_0_#808080]">Reset</span>
      </div>
      <div class="w-[144px] flex pt-[10px] border-r border-white">
        <div class="w-[30px] text-right leading-[11px] pt-[1px]">T1<br>T2<br><span class="whitespace-nowrap">T2-T1</span></div>
        <div class="ml-[6px] w-[71px] h-[36px] bg-white border border-black text-center text-[11px] leading-[11px] pt-px">99.8300 ms</div>
        <div class="ml-[2px] w-[27px] h-[23px] bg-white border border-black text-[11px] leading-[11px] pl-px pt-px">6000</div>
      </div>
      <div class="flex-1 flex flex-col">
        <div class="h-[23px] flex pt-[2px]">
          <span class="ml-[28px] w-[89px] leading-[13px] whitespace-nowrap">Clocks per division</span>
          <span class="ml-[1px] w-[49px] h-[13px] bg-white border-t border-l border-black pl-[2px] leading-[12px]">8</span>
          <svg class="ml-px w-[10px] h-[13px]"><use href="#spin"/></svg>
        </div>
        <div class="flex-1 flex border-t border-white">
          <div class="w-[130px] pl-[8px]">
            <div class="-mt-[7px] w-fit h-[14px] px-[1px] leading-[14px] bg-[#c0c0c0]">Clock</div>
            <span class="ml-[42px] w-[28px] h-[13px] flex items-center justify-center shadow-[inset_1px_1px_0_#fff,inset_-1px_-1px_0_#808080]">Set...</span>
            <div class="flex items-center mt-[1px] h-[13px]"><span class="w-[39px]">External</span><svg class="w-[12px] h-[12px]"><use href="#radio"/></svg><span class="ml-[11px] w-[40px]">Qualifier</span><svg class="w-[12px] h-[12px]"><use href="#radio"/></svg></div>
          </div>
          <div class="flex-1 pl-[8px] border-l border-white">
            <div class="-mt-[7px] w-fit h-[14px] px-[1px] leading-[14px] bg-[#c0c0c0]">Trigger</div>
            <span class="ml-[11px] w-[27px] h-[13px] flex items-center justify-center shadow-[inset_1px_1px_0_#fff,inset_-1px_-1px_0_#808080]">Set...</span>
            <div class="flex items-center mt-[1px] h-[13px] -ml-[5px]"><span class="w-[40px]">Qualifier</span><svg class="w-[12px] h-[12px]"><use href="#radio"/></svg></div>
          </div>
        </div>
      </div>
    </div>
  </div>
</section>

<!-- white trails left on screen by the redraw -->
<svg id="trails" class="absolute left-0 top-0 w-[1919px] h-[970px] pointer-events-none" viewBox="0 0 1919 970" fill="none" stroke="#fff"></svg>

<script>
    // oscilloscope grid and traces
    function drawScope() {
        let grid = "";
        for (let x = 279.5; x < 820; x += 40) grid += `M${x} 75V330`;
        for (let y = 83.5; y < 330; y += 40) grid += `M252 ${y}H827`;

        function trace(dir) {
            let lv = k => 203.5 - dir * 5 * k;
            let d = `M252 ${lv(12)}H255.5V${lv(13)}H275.5V${lv(14)}H295.5V${lv(15)}H315.5V203.5H335.5`;
            for (let k = 1; k <= 15; k++) d += `V${lv(k)}H${Math.min(335.5 + k * 20, 634.5)}`;
            return d;
        }

        document.getElementById("scope").innerHTML = `
            <path d="${grid}" stroke="#c0c0c0"/>
            <path d="M252 203.5H827" stroke="#808080"/>
            <path d="${trace(-1)}" stroke="#00f"/>
            <path d="${trace(1)}" stroke="#f00"/>
            <path d="M565.5 75V330" stroke="#f00"/>
            <path d="M588.5 75V330" stroke="#00f"/>`;
    }

    // logic analyzer dots, ticks and the four active channels
    function drawLogic() {
        let dots = "";
        for (let row = 0; row < 16; row++) {
            let y = 571 + row * 15;
            for (let x = 310; x < 688; x += 4) {
                let tick = (x - 322) % 16 === 0;
                dots += tick ? `M${x} ${y - 2}h1v3h-1z` : `M${x} ${y}h1v1h-1z`;
            }
        }
        document.getElementById("logic").innerHTML = `
            <path d="${dots}" fill="#000"/>
            <path d="M307 752.5H321.5V743.5H338M307 758.5H338M307 773.5H338M307 796.5H338" fill="none" stroke="#000"/>
            <rect x="305" y="557" width="3" height="243" fill="#f00"/>
            <rect x="689" y="557" width="1" height="243" fill="#00f"/>`;

        let probes = "";
        for (let i = 0; i < 16; i++) {
            probes += `<span class="w-[12px] h-[12px] flex items-center justify-center rounded-full border border-black bg-white font-['DejaVu_Sans_Mono',monospace] text-[8px] leading-none">${i >= 12 ? "0" : ""}</span>`;
        }
        document.getElementById("probes").innerHTML = probes;
    }

    // word generator list and bit row
    function drawWords() {
        let rows = "";
        for (let i = 0; i < 20; i++) {
            let word = i.toString(16).toUpperCase().padStart(4, "0");
            rows += i === 0 ? `<div class="bg-black text-white">${word}</div>` : `<div>${word}</div>`;
        }
        document.getElementById("words").innerHTML = rows;

        let bits = "";
        for (let i = 0; i < 16; i++) {
            let gap = i === 8 ? "ml-[3px] " : "";
            bits += `<span class="${gap}w-[12px] h-[12px] flex items-center justify-center rounded-full border border-black bg-white font-['DejaVu_Sans_Mono',monospace] text-[8px] leading-none">0</span>`;
        }
        document.getElementById("wordbits").innerHTML = bits;
    }

    function drawCounterIcon() {
        let d = "";
        for (let i = 0; i < 12; i++) {
            let y = 126 + i * 19;
            d += `M934 ${y + 8}h10v-8h10v8h10`;
        }
        document.getElementById("lawaves").innerHTML = `<path d="${d}"/>`;
    }

    function drawTrails() {
        let d = "";
        let right = [[1516,195],[1516,202],[1516,210],[1516,221],[1516,233],[1516,246],[1516,260],[1516,275],[1516,285],[1516,299],[1516,310],[1516,322],[1516,335],[1516,345],[1516,358],[1516,370],[1516,380],[1516,392],[1516,404],[1516,416],[1516,427],[1516,440],[1515,455],[1513,469],[1511,482],[1510,496],[1507,509],[1505,521],[1503,532],[1498,542],[1496,555],[1492,567],[1487,581],[1481,595],[1475,606],[1469,620],[1462,632],[1455,644],[1448,656],[1442,665],[1434,675],[1427,684]];
        right.forEach(([x, y]) => { d += `M${x} ${y}.5h4v2`; });
        let over = [[421,386],[430,390],[440,398],[448,404],[457,411],[466,418],[475,426],[484,434],[493,442],[501,448],[510,456],[518,465],[522,470],[530,475],[535,481]];
        over.forEach(([x, y]) => { d += `M${x}.5 ${y + 2}v-2h4`; });
        let specks = [[373,403],[367,408],[361,417],[354,426],[93,533],[89,537],[85,541],[81,546],[78,551],[67,565],[60,576],[55,584],[51,594],[51,596],[1873,529],[1878,530],[1883,530]];
        specks.forEach(([x, y]) => { d += `M${x} ${y}.5h1.5`; });
        d += "M36 668v-3h5";
        document.getElementById("trails").innerHTML = `
            <path d="${d}"/>
            <path d="M1338 168 1352 165 1360 160 1367 156" stroke-width="2"/>
            <path d="M251 532 265 528 275 525 286 523" stroke-width="2"/>
            <path d="M1887 529H1895M1516 178H1524" stroke-width="2"/>
            <path d="M1528 180H1546" stroke-dasharray="2 1"/>`;
    }

    drawScope();
    drawLogic();
    drawWords();
    drawCounterIcon();
    drawTrails();
</script>
</body>
</html>
